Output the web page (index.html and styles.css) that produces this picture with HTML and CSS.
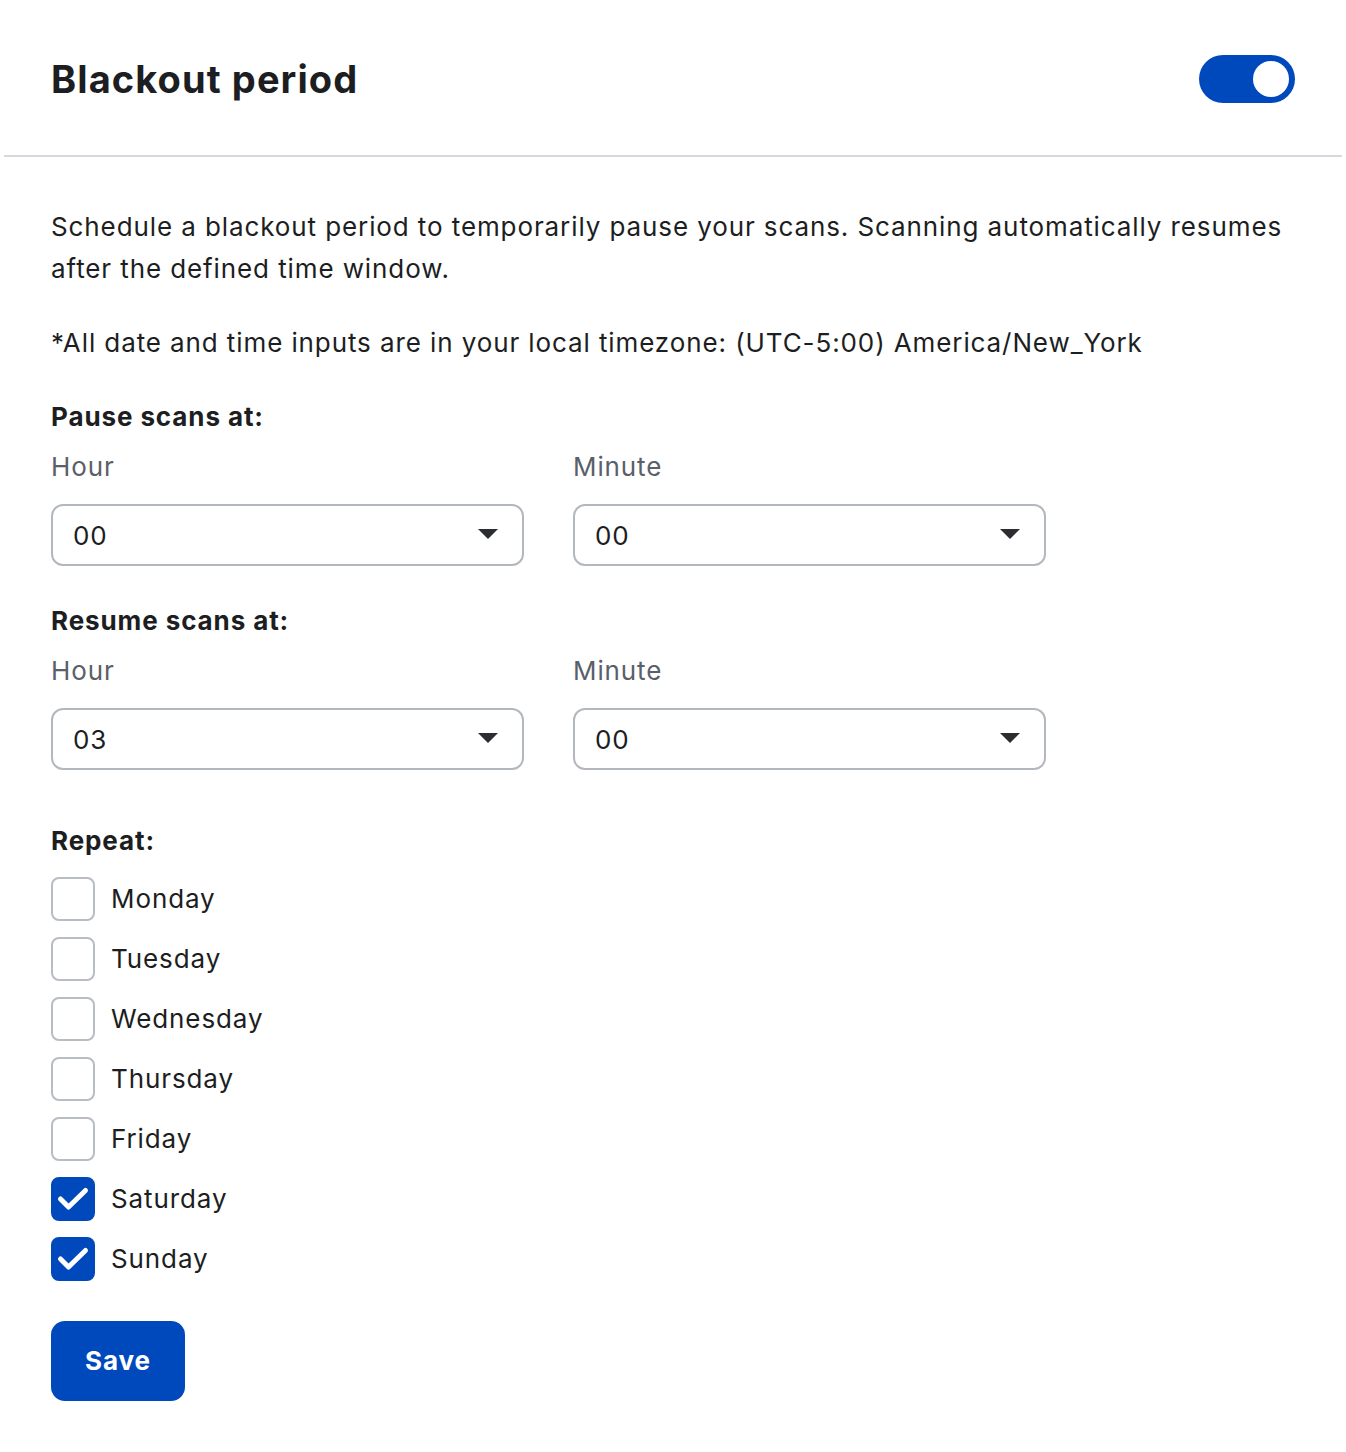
FILE: index.html
```html
<!DOCTYPE html>
<html lang="en">
<head>
<meta charset="utf-8">
<title>Blackout period</title>
<link rel="stylesheet" href="styles.css">
</head>
<body>
<div class="panel">
  <header class="panel-header">
    <h1 class="title">Blackout period</h1>
    <div class="toggle" role="switch" aria-checked="true"><span class="knob"></span></div>
  </header>
  <div class="panel-body">
    <p class="intro">Schedule a blackout period to temporarily pause your scans. Scanning automatically resumes after the defined time window.</p>
    <p class="note">*All date and time inputs are in your local timezone: (UTC-5:00) America/New_York</p>

    <h2 class="group-label">Pause scans at:</h2>
    <div class="field-row">
      <div class="field">
        <div class="field-label">Hour</div>
        <div class="select"><span>00</span><span class="caret"></span></div>
      </div>
      <div class="field">
        <div class="field-label">Minute</div>
        <div class="select"><span>00</span><span class="caret"></span></div>
      </div>
    </div>

    <h2 class="group-label resume">Resume scans at:</h2>
    <div class="field-row">
      <div class="field">
        <div class="field-label">Hour</div>
        <div class="select"><span>03</span><span class="caret"></span></div>
      </div>
      <div class="field">
        <div class="field-label">Minute</div>
        <div class="select"><span>00</span><span class="caret"></span></div>
      </div>
    </div>

    <h2 class="group-label repeat">Repeat:</h2>
    <ul class="days">
      <li class="day"><span class="box"></span>Monday</li>
      <li class="day"><span class="box"></span>Tuesday</li>
      <li class="day"><span class="box"></span>Wednesday</li>
      <li class="day"><span class="box"></span>Thursday</li>
      <li class="day"><span class="box"></span>Friday</li>
      <li class="day"><span class="box checked"><svg viewBox="0 0 44 44" width="44" height="44"><path d="M9.5 22 L17.5 30 L34.5 13.5" fill="none" stroke="#fff" stroke-width="5" stroke-linecap="round" stroke-linejoin="round"/></svg></span>Saturday</li>
      <li class="day"><span class="box checked"><svg viewBox="0 0 44 44" width="44" height="44"><path d="M9.5 22 L17.5 30 L34.5 13.5" fill="none" stroke="#fff" stroke-width="5" stroke-linecap="round" stroke-linejoin="round"/></svg></span>Sunday</li>
    </ul>

    <button class="save" type="button">Save</button>
  </div>
</div>
</body>
</html>
```

FILE: styles.css
```css
* { box-sizing: border-box; }
html, body { margin: 0; padding: 0; background: #fff; }
body {
  font-family: Inter, "Noto Sans", "Liberation Sans", sans-serif;
  color: #1c1e22;
  letter-spacing: 0.9px;
}
.panel { margin: 0 4px; }
.panel-header {
  height: 157px;
  border-bottom: 2px solid #d5d8dc;
  display: flex;
  align-items: center;
  justify-content: space-between;
  padding: 3px 47px 0 47px;
}
.title {
  margin: 0;
  font-size: 38px;
  font-weight: 700;
  letter-spacing: 1.1px;
  line-height: 46px;
}
.toggle {
  width: 96px;
  height: 48px;
  border-radius: 24px;
  background: #0049bd;
  position: relative;
}
.knob {
  position: absolute;
  right: 6px;
  top: 6px;
  width: 36px;
  height: 36px;
  border-radius: 50%;
  background: #fff;
}
.panel-body {
  padding: 49px 47px 40px 47px;
  display: flex;
  flex-direction: column;
  align-items: flex-start;
}
.intro, .note {
  margin: 0;
  font-size: 26px;
  line-height: 42px;
  color: #1c1e22;
}
.note { margin-top: 32px; }
.group-label {
  margin: 32px 0 0 0;
  font-size: 26px;
  line-height: 42px;
  font-weight: 700;
}
.group-label.resume { margin-top: 34px; }
.group-label.repeat { margin-top: 50px; }
.field-row {
  display: flex;
  gap: 49px;
  margin-top: 8px;
}
.field { width: 473px; }
.field-label {
  font-size: 26px;
  line-height: 42px;
  color: #5a6069;
}
.select {
  margin-top: 16px;
  height: 62px;
  border: 2px solid #b3b7be;
  border-radius: 12px;
  display: flex;
  align-items: center;
  justify-content: space-between;
  padding: 0 24px 0 20px;
  font-size: 26px;
  color: #1c1e22;
}
.caret {
  width: 0;
  height: 0;
  border-left: 10px solid transparent;
  border-right: 10px solid transparent;
  border-top: 10px solid #2b2d31;
  margin-top: -2px;
}
.days {
  list-style: none;
  margin: 15px 0 0 0;
  padding: 0;
  display: flex;
  flex-direction: column;
  gap: 16px;
}
.day {
  display: flex;
  align-items: center;
  gap: 16px;
  font-size: 26px;
  line-height: 44px;
  color: #1c1e22;
}
.box {
  width: 44px;
  height: 44px;
  border: 2px solid #b8bcc3;
  border-radius: 8px;
  display: flex;
  align-items: center;
  justify-content: center;
  flex: none;
}
.box.checked {
  background: #0049bd;
  border-color: #0049bd;
}
.box svg { flex: none; }
.save {
  margin-top: 40px;
  width: 134px;
  height: 80px;
  border: none;
  border-radius: 14px;
  background: #0049bd;
  color: #fff;
  font-family: Inter, "Noto Sans", "Liberation Sans", sans-serif;
  font-size: 26px;
  font-weight: 700;
  letter-spacing: 0.9px;
  padding: 0 0 2px 0;
}
```
